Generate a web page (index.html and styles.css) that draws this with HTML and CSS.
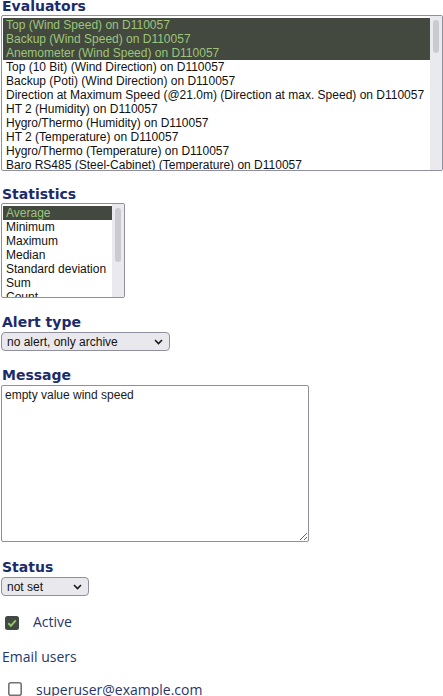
FILE: index.html
```html
<!DOCTYPE html>
<html>
<head>
<meta charset="utf-8">
<link rel="stylesheet" href="styles.css">
</head>
<body>
<form class="form">
  <div class="head head-first">Evaluators</div>
  <div class="listbox listbox-eval">
    <div class="opts">
      <div class="opt sel">Top (Wind Speed) on D110057</div>
      <div class="opt sel">Backup (Wind Speed) on D110057</div>
      <div class="opt sel">Anemometer (Wind Speed) on D110057</div>
      <div class="opt">Top (10 Bit) (Wind Direction) on D110057</div>
      <div class="opt">Backup (Poti) (Wind Direction) on D110057</div>
      <div class="opt">Direction at Maximum Speed (@21.0m) (Direction at max. Speed) on D110057</div>
      <div class="opt">HT 2 (Humidity) on D110057</div>
      <div class="opt">Hygro/Thermo (Humidity) on D110057</div>
      <div class="opt">HT 2 (Temperature) on D110057</div>
      <div class="opt">Hygro/Thermo (Temperature) on D110057</div>
      <div class="opt">Baro RS485 (Steel-Cabinet) (Temperature) on D110057</div>
      <div class="opt">Baro RS485 (Steel-Cabinet) (Pressure) on D110057</div>
    </div>
    <div class="sbar"><div class="thumb thumb-eval"></div></div>
  </div>

  <div class="head">Statistics</div>
  <div class="listbox listbox-stat">
    <div class="opts">
      <div class="opt sel">Average</div>
      <div class="opt">Minimum</div>
      <div class="opt">Maximum</div>
      <div class="opt">Median</div>
      <div class="opt">Standard deviation</div>
      <div class="opt">Sum</div>
      <div class="opt">Count</div>
      <div class="opt">Last</div>
    </div>
    <div class="sbar"><div class="thumb thumb-stat"></div></div>
  </div>

  <div class="head head-gap18">Alert type</div>
  <div class="dropdown dropdown-alert">
    <span class="dd-text">no alert, only archive</span>
    <svg class="chev" width="9" height="6" viewBox="0 0 9 6"><path d="M1 1 L4.5 4.5 L8 1" fill="none" stroke="#1a1a1a" stroke-width="1.6"/></svg>
  </div>

  <div class="head head-gap18">Message</div>
  <textarea class="message">empty value wind speed</textarea>

  <div class="head head-gap19">Status</div>
  <div class="dropdown dropdown-status">
    <span class="dd-text">not set</span>
    <svg class="chev" width="9" height="6" viewBox="0 0 9 6"><path d="M1 1 L4.5 4.5 L8 1" fill="none" stroke="#1a1a1a" stroke-width="1.6"/></svg>
  </div>

  <div class="check-row check-active">
    <svg class="box" width="14" height="14" viewBox="0 0 14 14"><rect x="0" y="0" width="14" height="14" rx="2.5" fill="#434840"/><path d="M3.3 7.3 L5.9 9.8 L10.8 4.4" fill="none" stroke="#92c46f" stroke-width="2"/></svg>
    <span class="check-label">Active</span>
  </div>

  <div class="plain-label">Email users</div>

  <div class="check-row check-user">
    <svg class="box" width="14" height="14" viewBox="0 0 14 14"><rect x="0.8" y="0.8" width="12.4" height="12.4" rx="2" fill="#fff" stroke="#737373" stroke-width="1.6"/></svg>
    <span class="check-label">superuser@example.com</span>
  </div>
</form>
</body>
</html>
```

FILE: styles.css
```css
html, body {
  margin: 0;
  padding: 0;
  background: #ffffff;
}

.form {
  display: flex;
  flex-direction: column;
  align-items: flex-start;
  padding: 0 0 0 1px;
  width: 442px;
}

.head {
  font-family: "DejaVu Sans", Verdana, sans-serif;
  font-weight: bold;
  font-size: 14px;
  line-height: 13px;
  height: 13px;
  color: #1c2b6c;
  margin: 17px 0 2px 1px;
}

.head-first {
  margin-top: 0;
}

.head-gap18 {
  margin-top: 18px;
  margin-bottom: 3px;
}

.head-gap19 {
  margin-top: 19px;
  margin-bottom: 3px;
}

.listbox {
  box-sizing: border-box;
  display: flex;
  border: 1px solid #8f8f9d;
  border-radius: 2px;
  background: #ffffff;
  overflow: hidden;
}

.listbox-eval {
  width: 442px;
  height: 156px;
}

.listbox-stat {
  width: 124px;
  height: 95px;
}

.opts {
  flex: 1;
  min-width: 0;
  padding: 2px 0 0 1px;
  overflow: hidden;
}

.opt {
  font-family: "Liberation Sans", Arial, sans-serif;
  font-size: 12px;
  line-height: 14px;
  height: 14px;
  padding-left: 3px;
  color: #111111;
  white-space: nowrap;
}

.opt.sel {
  background: #444940;
  color: #9cc57a;
}

.sbar {
  width: 12px;
  flex: none;
  background: #e9e9ee;
  display: flex;
  justify-content: center;
}

.thumb {
  width: 6px;
  border-radius: 3px;
  background: #cbcbcf;
}

.thumb-eval {
  margin-top: 4px;
  height: 33px;
}

.thumb-stat {
  margin-top: 4px;
  height: 54px;
}

.dropdown {
  box-sizing: border-box;
  display: flex;
  align-items: center;
  justify-content: space-between;
  height: 19px;
  border: 1px solid #8f8f9d;
  border-radius: 4px;
  background: #e9e9ed;
  padding: 0 6px 0 5px;
}

.dropdown-alert {
  width: 169px;
}

.dropdown-status {
  width: 88px;
}

.dd-text {
  font-family: "Liberation Sans", Arial, sans-serif;
  font-size: 12px;
  line-height: 14px;
  color: #111111;
}

.chev {
  display: block;
}

.message {
  box-sizing: border-box;
  display: block;
  width: 308px;
  height: 157px;
  margin: 0;
  border: 1px solid #8f8f9d;
  border-radius: 2px;
  padding: 2px 3px;
  font-family: "Liberation Sans", Arial, sans-serif;
  font-size: 12px;
  line-height: 14px;
  color: #1a1a1a;
  background: #ffffff;
  resize: both;
  outline: none;
}

.check-row {
  display: flex;
  align-items: flex-start;
  height: 14px;
}

.check-row .box {
  display: block;
  flex: none;
}

.check-label {
  font-family: "Open Sans", "DejaVu Sans", sans-serif;
  font-size: 14px;
  color: #27366e;
}

.check-active {
  margin: 20px 0 0 4px;
}

.check-active .check-label {
  margin-left: 14px;
  line-height: 12px;
}

.plain-label {
  font-family: "Open Sans", "DejaVu Sans", sans-serif;
  font-size: 14px;
  line-height: 11px;
  height: 11px;
  color: #27366e;
  margin: 21px 0 0 1px;
}

.check-user {
  margin: 20px 0 0 7px;
}

.check-user .check-label {
  margin-left: 14px;
  line-height: 15px;
}
```
